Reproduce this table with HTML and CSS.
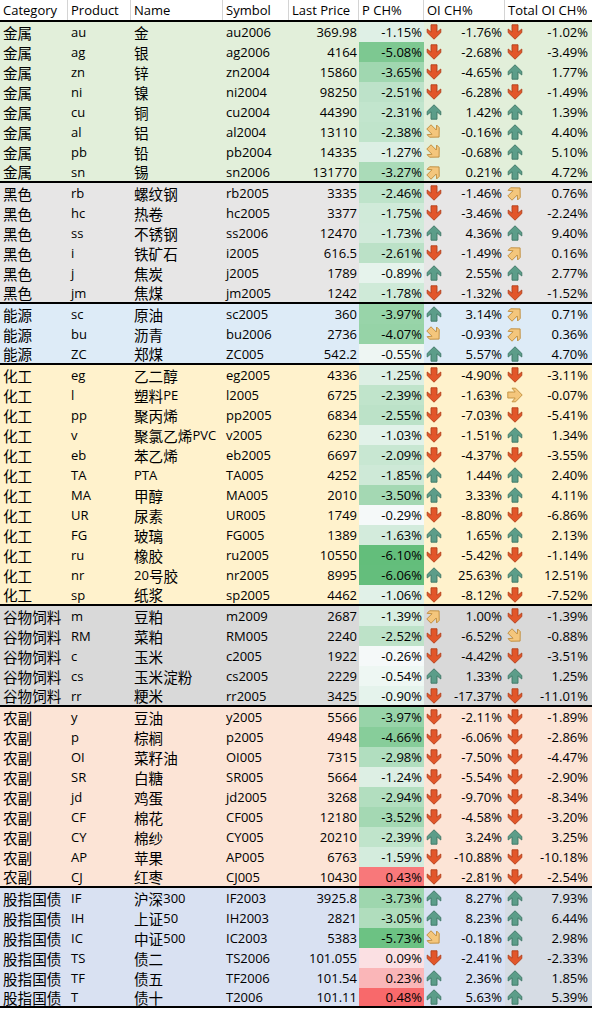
FILE: index.html
```html
<!DOCTYPE html>
<html lang="zh">
<head>
    <meta charset="UTF-8">
    <meta name="viewport" content="width=device-width, initial-scale=1.0">
    <title>Futures</title>
    <link rel="stylesheet" href="styles.css">
</head>
<body>
    <div class="sheet">
        <div class="row head">
            <div class="cell">Category</div>
            <div class="cell">Product</div>
            <div class="cell">Name</div>
            <div class="cell">Symbol</div>
            <div class="cell">Last Price</div>
            <div class="cell">P CH%</div>
            <div class="cell">OI CH%</div>
            <div class="cell">Total OI CH%</div>
        </div>
        <div id="sections"></div>
    </div>

    <script>
        // row: product, name, symbol, last price, p ch, oi icon, oi ch, total icon, total oi ch
        let sections = [
            {cat: "金属", cls: "metal", rows: [
                ["au", "金", "au2006", "369.98", -1.15, "down", -1.76, "down", -1.02],
                ["ag", "银", "ag2006", "4164", -5.08, "down", -2.68, "down", -3.49],
                ["zn", "锌", "zn2004", "15860", -3.65, "down", -4.65, "up", 1.77],
                ["ni", "镍", "ni2004", "98250", -2.51, "down", -6.28, "down", -1.49],
                ["cu", "铜", "cu2004", "44390", -2.31, "up", 1.42, "up", 1.39],
                ["al", "铝", "al2004", "13110", -2.38, "dr", -0.16, "up", 4.40],
                ["pb", "铅", "pb2004", "14335", -1.27, "dr", -0.68, "up", 5.10],
                ["sn", "锡", "sn2006", "131770", -3.27, "ur", 0.21, "up", 4.72]
            ]},
            {cat: "黑色", cls: "ferrous", rows: [
                ["rb", "螺纹钢", "rb2005", "3335", -2.46, "down", -1.46, "ur", 0.76],
                ["hc", "热卷", "hc2005", "3377", -1.75, "down", -3.46, "down", -2.24],
                ["ss", "不锈钢", "ss2006", "12470", -1.73, "up", 4.36, "up", 9.40],
                ["i", "铁矿石", "i2005", "616.5", -2.61, "down", -1.49, "ur", 0.16],
                ["j", "焦炭", "j2005", "1789", -0.89, "up", 2.55, "up", 2.77],
                ["jm", "焦煤", "jm2005", "1242", -1.78, "down", -1.32, "down", -1.52]
            ]},
            {cat: "能源", cls: "energy", rows: [
                ["sc", "原油", "sc2005", "360", -3.97, "up", 3.14, "ur", 0.71],
                ["bu", "沥青", "bu2006", "2736", -4.07, "dr", -0.93, "ur", 0.36],
                ["ZC", "郑煤", "ZC005", "542.2", -0.55, "up", 5.57, "up", 4.70]
            ]},
            {cat: "化工", cls: "chem", rows: [
                ["eg", "乙二醇", "eg2005", "4336", -1.25, "down", -4.90, "down", -3.11],
                ["l", "塑料PE", "l2005", "6725", -2.39, "down", -1.63, "right", -0.07],
                ["pp", "聚丙烯", "pp2005", "6834", -2.55, "down", -7.03, "down", -5.41],
                ["v", "聚氯乙烯PVC", "v2005", "6230", -1.03, "down", -1.51, "up", 1.34],
                ["eb", "苯乙烯", "eb2005", "6697", -2.09, "down", -4.37, "down", -3.55],
                ["TA", "PTA", "TA005", "4252", -1.85, "up", 1.44, "up", 2.40],
                ["MA", "甲醇", "MA005", "2010", -3.50, "up", 3.33, "up", 4.11],
                ["UR", "尿素", "UR005", "1749", -0.29, "down", -8.80, "down", -6.86],
                ["FG", "玻璃", "FG005", "1389", -1.63, "up", 1.65, "up", 2.13],
                ["ru", "橡胶", "ru2005", "10550", -6.10, "down", -5.42, "down", -1.14],
                ["nr", "20号胶", "nr2005", "8995", -6.06, "up", 25.63, "up", 12.51],
                ["sp", "纸浆", "sp2005", "4462", -1.06, "down", -8.12, "down", -7.52]
            ]},
            {cat: "谷物饲料", cls: "grain", rows: [
                ["m", "豆粕", "m2009", "2687", -1.39, "ur", 1.00, "down", -1.39],
                ["RM", "菜粕", "RM005", "2240", -2.52, "down", -6.52, "dr", -0.88],
                ["c", "玉米", "c2005", "1922", -0.26, "down", -4.42, "down", -3.51],
                ["cs", "玉米淀粉", "cs2005", "2229", -0.54, "up", 1.33, "up", 1.25],
                ["rr", "粳米", "rr2005", "3425", -0.90, "down", -17.37, "down", -11.01]
            ]},
            {cat: "农副", cls: "farm", rows: [
                ["y", "豆油", "y2005", "5566", -3.97, "down", -2.11, "down", -1.89],
                ["p", "棕榈", "p2005", "4948", -4.66, "down", -6.06, "down", -2.86],
                ["OI", "菜籽油", "OI005", "7315", -2.98, "down", -7.50, "down", -4.47],
                ["SR", "白糖", "SR005", "5664", -1.24, "down", -5.54, "down", -2.90],
                ["jd", "鸡蛋", "jd2005", "3268", -2.94, "down", -9.70, "down", -8.34],
                ["CF", "棉花", "CF005", "12180", -3.52, "down", -4.58, "down", -3.20],
                ["CY", "棉纱", "CY005", "20210", -2.39, "up", 3.24, "up", 3.25],
                ["AP", "苹果", "AP005", "6763", -1.59, "down", -10.88, "down", -10.18],
                ["CJ", "红枣", "CJ005", "10430", 0.43, "down", -2.81, "down", -2.54]
            ]},
            {cat: "股指国债", cls: "index", rows: [
                ["IF", "沪深300", "IF2003", "3925.8", -3.73, "up", 8.27, "up", 7.93],
                ["IH", "上证50", "IH2003", "2821", -3.05, "up", 8.23, "up", 6.44],
                ["IC", "中证500", "IC2003", "5383", -5.73, "dr", -0.18, "up", 2.98],
                ["TS", "债二", "TS2006", "101.055", 0.09, "down", -2.41, "down", -2.33],
                ["TF", "债五", "TF2006", "101.54", 0.23, "up", 2.36, "up", 1.85],
                ["T", "债十", "T2006", "101.11", 0.48, "up", 5.63, "up", 5.39]
            ]}
        ]

        let up_path = "M8 0.8 L14.8 7.4 L14.8 11 L11 7.8 L11 15.2 L5 15.2 L5 7.8 L1.2 11 L1.2 7.4 Z"
        let icons = {
            up: {cls: "green", rot: 0},
            down: {cls: "red", rot: 180},
            ur: {cls: "tan", rot: 45},
            right: {cls: "tan", rot: 90},
            dr: {cls: "tan", rot: 135}
        }

        function arrow(kind) {
            let icon = icons[kind]
            return '<svg class="arrow ' + icon.cls + '" viewBox="0 0 16 16" width="16" height="16">' +
                '<path d="' + up_path + '" transform="rotate(' + icon.rot + ' 8 8)"/></svg>'
        }

        // excel style 3 colour scale, midpoint 0
        let p_min = -6.10
        let p_max = 0.48
        let white = [252, 252, 255]
        let green = [99, 190, 123]
        let red = [248, 105, 107]

        function scaleColor(v) {
            let target = v < 0 ? green : red
            let t = v < 0 ? v / p_min : v / p_max
            let rgb = white.map((w, i) => Math.round(w + (target[i] - w) * t))
            return "rgb(" + rgb.join(",") + ")"
        }

        function cjk(text) {
            return text.replace(/([\u4e00-\u9fff]+)/g, '<span class="cjk">$1</span>')
        }

        function pct(v) {
            return v.toFixed(2) + "%"
        }

        let holder = document.getElementById("sections")

        sections.forEach(section => {
            let block = document.createElement("div")
            block.classList.add("section", section.cls)

            section.rows.forEach(r => {
                let row = document.createElement("div")
                row.classList.add("row")
                row.innerHTML =
                    '<div class="cell">' + cjk(section.cat) + '</div>' +
                    '<div class="cell">' + r[0] + '</div>' +
                    '<div class="cell">' + cjk(r[1]) + '</div>' +
                    '<div class="cell">' + r[2] + '</div>' +
                    '<div class="cell num">' + r[3] + '</div>' +
                    '<div class="cell num" style="background:' + scaleColor(r[4]) + '">' + pct(r[4]) + '</div>' +
                    '<div class="cell num oi">' + arrow(r[5]) + '<span>' + pct(r[6]) + '</span></div>' +
                    '<div class="cell num oi total">' + arrow(r[7]) + '<span>' + pct(r[8]) + '</span></div>'
                block.appendChild(row)
            })

            holder.appendChild(block)
        })
    </script>
</body>
</html>
```

FILE: styles.css
```css
body {
    margin: 0;
    padding: 0;
    background-color: #ffffff;
}

.sheet {
    width: 592px;
    font-family: "Open Sans", "Noto Sans CJK SC", sans-serif;
    font-size: 13px;
    color: #000000;
}

.row {
    display: grid;
    grid-template-columns: 68px 63px 92px 66px 70px 65px 81px 87px;
    height: 20px;
}

.cell {
    display: flex;
    align-items: center;
    padding-left: 3px;
    white-space: nowrap;
    overflow: hidden;
}

.cjk {
    font-family: "Noto Sans CJK SC", sans-serif;
    font-size: 14.6px;
}

.num {
    justify-content: flex-end;
    padding-left: 0;
    padding-right: 2px;
}

.oi {
    justify-content: space-between;
    padding-left: 2px;
    padding-right: 3px;
}

.total {
    padding-right: 4px;
}

.head .cell {
    border-right: 1px solid #d4d4d4;
}

.head .cell:last-child {
    border-right: none;
}

/* thick black rule on top of every group */
.section {
    border-top: 2px solid #000000;
}

.section .row:last-child {
    height: 19px;
}

.section:last-child {
    border-bottom: 2px solid #000000;
}

.section:last-child .row:last-child {
    height: 18px;
}

.metal { background-color: #e2efda; }
.ferrous { background-color: #e7e6e6; }
.energy { background-color: #ddebf7; }
.chem { background-color: #fff2cc; }
.grain { background-color: #d9d9d9; }
.farm { background-color: #fce4d6; }
.index { background-color: #d9e1f2; }

.index .total {
    background-color: #d6dce4;
}

.arrow {
    flex: none;
}

.arrow path {
    stroke-width: 0.9;
    stroke-linejoin: round;
}

.green path {
    fill: #5c9d89;
    stroke: #3d7665;
}

.red path {
    fill: #e2562a;
    stroke: #b23f1b;
}

.tan path {
    fill: #f4c67c;
    stroke: #c08e3e;
}
```
